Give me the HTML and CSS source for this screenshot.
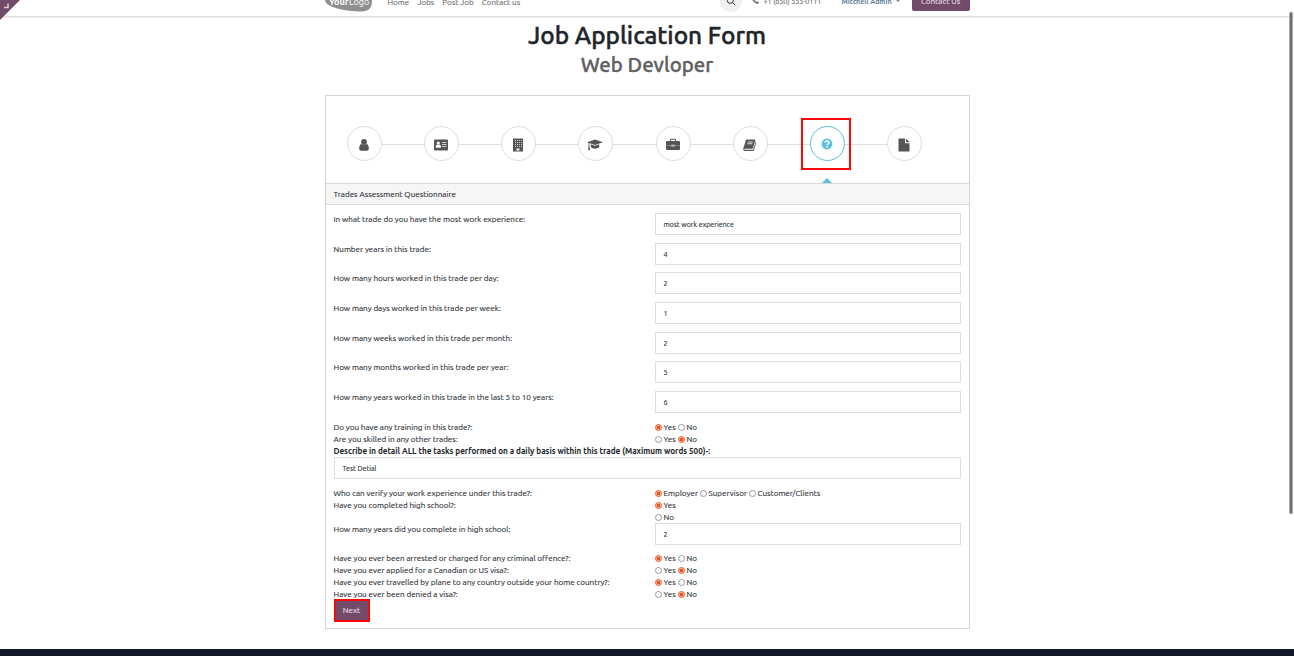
FILE: index.html
```
<!DOCTYPE html>
<html lang="en">
<head>
<meta charset="utf-8">
<title>Job Application Form</title>
<link rel="stylesheet" href="styles.css">
</head>
<body>
<header class="topbar">
  <div class="topbar-inner">
    <div class="logo"><svg width="48" height="26" viewBox="0 0 48 26"><path d="M0 10C0 3 10 0 24 0s23 4 23 14c0 8-3 11.500-11 11.500C20 25.500 0 21 0 14z" fill="#8f8f8f"/><text x="4" y="18.500" class="logo-a">Your</text><text x="24" y="18.500" class="logo-b">Logo</text></svg></div>
    <nav class="nav"><a class="n1">Home</a><a class="n2">Jobs</a><a class="n3">Post Job</a><a class="n4">Contact us</a></nav>
    <div class="search"><svg width="10" height="10" viewBox="0 0 10 10" fill="none" stroke="#333"><circle cx="4.300" cy="4.300" r="3.100"/><path d="M6.600 6.600L9.300 9.300"/></svg></div>
    <div class="phone"><svg width="7" height="7" viewBox="0 0 7 7"><path d="M1.500 0L2.700 1.600 2 2.700 4.300 5l1.100-.7L7 5.500 6 7C3 7 0 4 0 1z" fill="#777"/></svg><span>+1 (650) 555-0111</span></div>
    <div class="user"><span>Mitchell Admin</span><i class="caret"></i></div>
    <a class="contact">Contact Us</a>
  </div>
</header>
<div class="corner"><svg width="20" height="20" viewBox="0 0 20 20"><path d="M0 0H20L0 20z" fill="#714b67"/><path d="M4 7.500h4V3.500" fill="none" stroke="#d5c8d1" stroke-width="1.600"/></svg></div>
<div class="scrollbar"></div>

<main class="page">
  <h1 class="title">Job Application Form</h1>
  <h2 class="subtitle">Web Devloper</h2>
  <section class="panel">
    <ol class="steps">
      <li class="step"><svg viewBox="0 0 14 14"><circle cx="7" cy="4" r="2.900"/><path d="M4.300 6Q7 8 9.700 6 11.800 6.500 11.800 10.500 11.800 12.700 10 12.700H4Q2.200 12.700 2.200 10.500 2.200 6.500 4.300 6z"/></svg></li>
      <li class="step"><svg viewBox="0 0 14 14"><rect y="1.500" width="14" height="11" rx="1"/><g fill="#fff"><circle cx="4.300" cy="5" r="1.600"/><path d="M1.700 9.800Q1.700 6.500 3.200 6.400L4.300 7 5.400 6.400Q7 6.500 7 9.800z"/><path fill="#ccc" d="M8 4h4.500v1H8zM8 6h4.500v1H8zM8 8h4.500v1H8zM3 11.800h1v.7H3zM10 11.800h1v.7h-1z"/></g></svg></li>
      <li class="step"><svg viewBox="0 0 14 14"><path d="M2 .5h10v13H2z"/><path fill="#ccc" d="M4 2h1v1h-1zM6 2h1v1h-1zM8 2h1v1h-1zM10 2h1v1h-1zM4 4h1v1h-1zM6 4h1v1h-1zM8 4h1v1h-1zM10 4h1v1h-1zM4 6h1v1h-1zM6 6h1v1h-1zM8 6h1v1h-1zM10 6h1v1h-1zM4 8h1v1h-1zM6 8h1v1h-1zM8 8h1v1h-1zM10 8h1v1h-1z"/><path fill="#fff" d="M5.500 10.500h3v2h-3z"/></svg></li>
      <li class="step"><svg class="wide" viewBox="0 0 16 14"><path d="M8 1.500L16 4.200 8 6.900 0 4.200z"/><path d="M3.800 6.300L8 7.700l4.200-1.400v2.800Q11 10.800 8 10.800T3.800 9.100zM1.500 4.800h.9v3.700l.7 3.500H1l.5-3.500z"/></svg></li>
      <li class="step"><svg viewBox="0 0 14 14"><path fill-rule="evenodd" d="M4 3V1.500Q4 .7 4.800.7h4.400q.8 0 .8.800V3h3q1 0 1 1v3.200H8.500V6.800h-3v.4H0V4q0-1 1-1zm1 0h4V1.700H5zM0 7.600h5.500v1h3v-1H14V11q0 1-1 1H1q-1 0-1-1z"/><path d="M6.400 7.200h1.200v1H6.400z"/></svg></li>
      <li class="step"><svg viewBox="0 0 14 14"><path d="M4 1.500h7.500q1 0 .8 1L10 9.900q-.2.800-1 .8H2q-.8 0-.8.500t.8.600h7.600q.5 0 .7-.5l2.400-7.600q.7.300.5 1L11 12.200q-.3.800-1.200.8H1.800Q0 13 .3 10.500L2.700 2.500q.3-1 1.300-1z"/><path fill="#ddd" d="M5 3.500h5l-.3.900h-5zM4.400 5.300h5l-.3.900h-5z"/></svg></li>
      <li class="step active"><svg viewBox="0 0 14 14"><circle cx="7" cy="7" r="5.400"/><path d="M5 5.600Q5.200 4.100 7 4.100T9 5.700C9 7 7.200 6.800 7.200 8.200" fill="none" stroke="#fff" stroke-width="1.500"/><path d="M6.400 9.200h1.600v1.500H6.400z" fill="#fff"/></svg><span class="highlight"></span><span class="pointer"></span></li>
      <li class="step"><svg viewBox="0 0 14 14"><path d="M1.500.5H8v4.700h4.500v8.300h-11zM9 .5l3.500 3.700H9z"/></svg></li>
    </ol>
    <div class="panel-head">Trades Assessment Questionnaire</div>
    <form class="form">
      <div class="row field"><label>In what trade do you have the most work experience:</label><div class="input">most work experience</div></div>
      <div class="row field"><label>Number years in this trade:</label><div class="input">4</div></div>
      <div class="row field"><label>How many hours worked in this trade per day:</label><div class="input">2</div></div>
      <div class="row field"><label>How many days worked in this trade per week:</label><div class="input">1</div></div>
      <div class="row field"><label>How many weeks worked in this trade per month:</label><div class="input">2</div></div>
      <div class="row field"><label>How many months worked in this trade per year:</label><div class="input">5</div></div>
      <div class="row field"><label>How many years worked in this trade in the last 5 to 10 years:</label><div class="input">6</div></div>
      <div class="row"><label>Do you have any training in this trade?:</label><div class="opts"><i class="radio on"></i><span class="yes">Yes</span><i class="radio"></i><span>No</span></div></div>
      <div class="row"><label>Are you skilled in any other trades:</label><div class="opts"><i class="radio"></i><span class="yes">Yes</span><i class="radio on"></i><span>No</span></div></div>
      <div class="bold">Describe in detail ALL the tasks performed on a daily basis within this trade (Maximum words 500)-:</div>
      <div class="input full">Test Detial</div>
      <div class="row"><label>Who can verify your work experience under this trade?:</label><div class="opts"><i class="radio on"></i><span class="emp">Employer</span><i class="radio"></i><span class="sup">Supervisor</span><i class="radio"></i><span>Customer/Clients</span></div></div>
      <div class="row"><label>Have you completed high school?:</label><div class="opts"><i class="radio on"></i><span>Yes</span></div></div>
      <div class="row"><label></label><div class="opts"><i class="radio"></i><span>No</span></div></div>
      <div class="row field last"><label>How many years did you complete in high school:</label><div class="input">2</div></div>
      <div class="row"><label>Have you ever been arrested or charged for any criminal offence?:</label><div class="opts"><i class="radio on"></i><span class="yes">Yes</span><i class="radio"></i><span>No</span></div></div>
      <div class="row"><label>Have you ever applied for a Canadian or US visa?:</label><div class="opts"><i class="radio"></i><span class="yes">Yes</span><i class="radio on"></i><span>No</span></div></div>
      <div class="row"><label>Have you ever travelled by plane to any country outside your home country?:</label><div class="opts"><i class="radio on"></i><span class="yes">Yes</span><i class="radio"></i><span>No</span></div></div>
      <div class="row"><label>Have you ever been denied a visa?:</label><div class="opts"><i class="radio"></i><span class="yes">Yes</span><i class="radio on"></i><span>No</span></div></div>
      <button type="button" class="next">Next</button>
    </form>
  </section>
</main>
<footer class="footer"></footer>
</body>
</html>
```
FILE: styles.css
```
* { box-sizing: border-box; }
body { margin: 0; height: 656px; overflow: hidden; display: flex; flex-direction: column; background: #fff; color: #2b2e33; font: 8.090px/12px Ubuntu, "Noto Sans", sans-serif; white-space: nowrap; -webkit-text-stroke: .12px currentColor; }
.topbar { height: 16px; flex: none; overflow: hidden; box-shadow: 0 1px 2px rgba(0,0,0,.18); }
.topbar-inner { height: 35px; margin: -16px auto 0; width: 645px; display: flex; align-items: center; color: #6c6c6c; font-size: 8.050px; }
.logo { width: 63px; height: 26px; margin-top: -6px; }
.logo svg { display: block; }
.logo-a { font-size: 9px; font-weight: 700; fill: #fff; }
.logo-b { font-size: 9px; fill: #fff; -webkit-text-stroke: 0; }
.nav { display: flex; width: 332px; }
.n1 { width: 30px; } .n2 { width: 24.800px; } .n3 { width: 39.500px; }
.search { width: 22px; height: 22px; border-radius: 50%; background: #f0f0f0; display: grid; place-items: center; margin: -2px 10px 0 0; }
.phone { display: flex; align-items: center; width: 90px; gap: 5px; font-size: 7.100px; margin-top: -2px; }
.phone svg { margin-top: -1px; }
.user { display: flex; align-items: center; width: 70px; gap: 4px; color: #66809a; font-weight: 700; font-size: 7.050px; margin-top: -2px; -webkit-text-stroke: 0; }
.caret { border: 2px solid transparent; border-top-color: #7089a0; border-bottom: 0; }
.contact { width: 58px; height: 19px; border-radius: 2px; background: #714b67; color: #e6dee4; text-align: center; line-height: 19px; }
.corner { position: absolute; left: 0; top: 0; }
.corner svg { display: block; }
.scrollbar { position: absolute; left: 1289px; top: 12px; width: 4px; height: 502px; border-radius: 2px; background: #6f6f6f; border: solid #aaa; border-width: 0 1px; }
.page { flex: 1; }
.title, .subtitle { margin: 0; text-align: center; font-weight: 500; }
.title { margin-top: 4px; font-size: 24.400px; line-height: 31px; color: #212529; -webkit-text-stroke: .45px #212529; }
.subtitle { font-size: 20.400px; line-height: 28px; color: #5f6062; -webkit-text-stroke: .35px #5f6062; }
.panel { width: 645px; height: 534px; margin: 16px auto 0; position: relative; left: .5px; border: 1px solid #d5d5d5; }
.steps { list-style: none; display: flex; justify-content: space-between; margin: 0; padding: 30px 47px 0 21px; height: 87px; background: linear-gradient(#ddd, #ddd) 38px 48px / 540px 1px no-repeat; }
.step { position: relative; width: 35px; height: 35px; border: 1px solid #ddd; border-radius: 50%; background: #fff; display: grid; place-items: center; }
.step svg { width: 14px; height: 14px; fill: #555; margin: 2px 1px 0 0; }
.step svg.wide { width: 16px; }
.active { border-color: #5bc0de; }
.step.active svg { fill: #5bc0de; margin-top: 1.500px; }
.highlight { position: absolute; left: -9.500px; top: -9.500px; width: 50px; height: 52.500px; border: 2px solid #fa0808; }
.pointer { position: absolute; left: 11.500px; top: 51px; border: 5px solid transparent; border-bottom-color: #5bc0de; border-top: 0; }
.panel-head { height: 22px; border: solid #d8d8d8; border-width: 1px 0; background: #f6f6f6; padding-left: 7.500px; line-height: 21px; }
.form { padding: 8px; }
.row { display: grid; grid-template-columns: 321px 1fr; height: 12px; }
.row label, .bold { margin-left: -.5px; }
.field { height: 29.670px; }
.field.last { height: 29px; }
.input { height: 22px; border: 1px solid #ddd; padding-left: 7.500px; line-height: 21px; font-size: 7.080px; }
.opts { display: flex; align-items: center; }
.radio { width: 7px; height: 7px; border: 1px solid #999aa2; border-radius: 50%; background: #fff; margin: 1px 1.500px 0 0; }
.radio.on { border-color: #e95420; background: radial-gradient(circle, #e95420 0 1.600px, #f9c8b5 2.100px); }
.yes { width: 14.500px; }
.emp { width: 36.500px; }
.sup { width: 40.500px; }
.bold { font-size: 8.140px; font-weight: 700; color: #212529; margin-top: .2px; -webkit-text-stroke: 0; }
.full { margin-bottom: 8px; line-height: 20px; }
.next { display: block; width: 36px; height: 23px; margin: -1.200px 0 0; border: 2px solid #fa0808; background: #714b67; color: #e6dee4; font: inherit; padding: 0 1px 0 0; }
.footer { height: 7px; flex: none; background: #111827; }
```
